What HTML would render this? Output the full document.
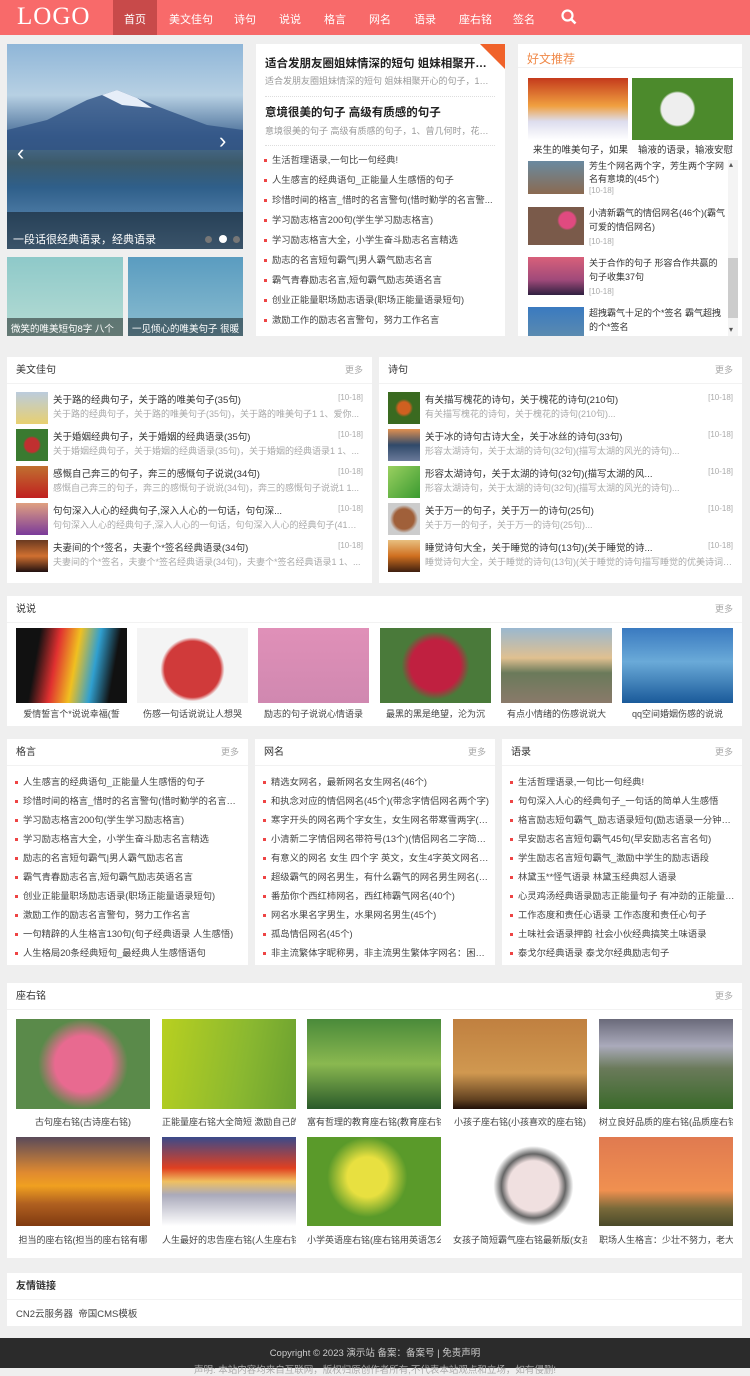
<!DOCTYPE html>
<html><head><meta charset="utf-8"><style>
*{margin:0;padding:0;box-sizing:border-box}
body{width:750px;height:1368px;background:#efefef;font-family:"Liberation Sans","Noto Sans CJK SC",sans-serif;position:relative;overflow:hidden;color:#333}
.a{position:absolute}
.w{position:absolute;background:#fff}
.hd{position:absolute;left:0;right:0;top:0;height:27px;border-bottom:1px solid #f2f2f2;font-size:10px;line-height:27px;padding-left:9px;color:#333}
.hd span{position:absolute;right:9px;color:#aaa;font-size:9px}
.nw{white-space:nowrap;overflow:hidden;text-overflow:ellipsis}
ul{list-style:none}
.dl li{font-size:9.3px;height:19px;line-height:19px;padding-left:10px;position:relative;white-space:nowrap;overflow:hidden;text-overflow:ellipsis;color:#444}
.dl li:before{content:"";position:absolute;left:2px;top:8px;width:3px;height:3px;background:#e44}
.it{position:absolute;left:9px;right:9px;height:37px}
.it i{position:absolute;left:0;top:1px;width:32px;height:32px}
.it b{position:absolute;left:37px;right:40px;top:1px;font-weight:normal;font-size:9.5px;color:#333;white-space:nowrap;overflow:hidden;text-overflow:ellipsis}
.it s{position:absolute;left:37px;right:0;top:16px;text-decoration:none;font-size:9px;color:#aaa;white-space:nowrap;overflow:hidden;text-overflow:ellipsis}
.it em{position:absolute;right:0;top:2px;font-style:normal;font-size:8px;color:#aaa}
.cap{position:absolute;font-size:9px;color:#444;text-align:center;white-space:nowrap;overflow:hidden}
</style></head><body>
<div class="a" style="left:0;top:0;width:750px;height:35px;background:#f86a6a"></div>
<div class="a" style="left:17px;top:3px;font-family:'Liberation Serif',serif;font-size:25px;color:#fff;letter-spacing:1px">LOGO</div>
<div class="a" style="left:113px;top:0;width:44px;height:35px;background:#c84a4a"></div>
<div class="a" style="top:11px;font-size:11px;color:#fff;left:0;width:750px">
<span class="a" style="left:124px">首页</span><span class="a" style="left:169px">美文佳句</span><span class="a" style="left:234px">诗句</span><span class="a" style="left:279px">说说</span><span class="a" style="left:324px">格言</span><span class="a" style="left:369px">网名</span><span class="a" style="left:414px">语录</span><span class="a" style="left:459px">座右铭</span><span class="a" style="left:513px">签名</span></div>
<svg class="a" style="left:561px;top:9px" width="16" height="16"><circle cx="6.5" cy="6.5" r="5" fill="none" stroke="#fff" stroke-width="2.2"/><path d="M10 10l4.5 4.5" stroke="#fff" stroke-width="2.6"/></svg>

<div class="a" style="left:7px;top:44px;width:236px;height:205px;background:linear-gradient(#8fb6d8 0%,#b7d0e3 25%,#4a6f99 45%,#3c5a6a 58%,#2f5f8a 70%,#6b98c0 100%)"></div>
<svg class="a" style="left:7px;top:80px" width="236" height="70"><path d="M0 50L40 40 80 20 110 10 130 18 160 30 200 45 236 50V70H0z" fill="#2f5385" opacity=".8"/><path d="M95 15l15-5 20 8 15 10-30-3z" fill="#e6eef8"/></svg>
<div class="a" style="left:7px;top:212px;width:236px;height:37px;background:rgba(0,0,0,.45)"></div>
<div class="a" style="left:13px;top:231px;font-size:11px;color:#fff">一段话很经典语录，经典语录</div>
<div class="a" style="left:205px;top:236px;width:7px;height:7px;border-radius:50%;background:#777"></div>
<div class="a" style="left:219px;top:235px;width:8px;height:8px;border-radius:50%;background:#fff"></div>
<div class="a" style="left:233px;top:236px;width:7px;height:7px;border-radius:50%;background:#777"></div>
<div class="a" style="left:17px;top:140px;color:#fff;font-size:22px">‹</div>
<div class="a" style="left:219px;top:128px;color:#fff;font-size:22px">›</div>
<div class="a" style="left:7px;top:257px;width:116px;height:79px;background:linear-gradient(#8ec9c9,#b6dcd4)"></div>
<div class="a" style="left:128px;top:257px;width:115px;height:79px;background:linear-gradient(#5a9cc0,#8bbdd0)"></div>
<div class="a" style="left:7px;top:318px;width:116px;height:18px;background:rgba(0,0,0,.45)"></div>
<div class="a" style="left:128px;top:318px;width:115px;height:18px;background:rgba(0,0,0,.45)"></div>
<div class="a nw" style="left:11px;top:321px;width:110px;font-size:9.5px;color:#fff">微笑的唯美短句8字 八个</div>
<div class="a nw" style="left:132px;top:321px;width:110px;font-size:9.5px;color:#fff">一见倾心的唯美句子 很暖</div>

<div class="w" style="left:256px;top:44px;width:249px;height:292px"></div>
<svg class="a" style="left:480px;top:44px" width="25" height="25"><path d="M0 0H25V25z" fill="#f0622a"/></svg>
<div class="a nw" style="left:265px;top:55px;width:230px;font-size:11.5px;font-weight:bold;color:#222">适合发朋友圈姐妹情深的短句 姐妹相聚开心的</div>
<div class="a nw" style="left:265px;top:74px;width:230px;font-size:9px;color:#999">适合发朋友圈姐妹情深的短句 姐妹相聚开心的句子，1、...</div>
<div class="a" style="left:265px;top:96px;width:230px;border-top:1px dotted #ddd"></div>
<div class="a nw" style="left:265px;top:104px;width:230px;font-size:11.5px;font-weight:bold;color:#222">意境很美的句子 高级有质感的句子</div>
<div class="a nw" style="left:265px;top:124px;width:230px;font-size:9px;color:#999">意境很美的句子 高级有质感的句子，1、曾几何时，花前...</div>
<div class="a" style="left:265px;top:145px;width:230px;border-top:1px dotted #ddd"></div>
<ul class="a dl" style="left:262px;top:151px;width:234px"><li style="height:20px">生活哲理语录,一句比一句经典!</li><li style="height:20px">人生感言的经典语句_正能量人生感悟的句子</li><li style="height:20px">珍惜时间的格言_惜时的名言警句(惜时勤学的名言警...</li><li style="height:20px">学习励志格言200句(学生学习励志格言)</li><li style="height:20px">学习励志格言大全，小学生奋斗励志名言精选</li><li style="height:20px">励志的名言短句霸气|男人霸气励志名言</li><li style="height:20px">霸气青春励志名言,短句霸气励志英语名言</li><li style="height:20px">创业正能量职场励志语录(职场正能量语录短句)</li><li style="height:20px">激励工作的励志名言警句，努力工作名言</li></ul>

<div class="w" style="left:518px;top:44px;width:224px;height:292px"></div>
<div class="a" style="left:527px;top:50px;font-size:12px;color:#f08a4a">好文推荐</div>
<div class="a" style="left:518px;top:67px;width:224px;border-top:1px solid #f2f2f2"></div>
<div class="a" style="left:528px;top:78px;width:100px;height:62px;background:linear-gradient(#c43a1c,#f0a040 45%,#dde 70%,#fff)"></div>
<div class="a" style="left:632px;top:78px;width:101px;height:62px;background:radial-gradient(circle at 45% 50%,#eee 0 16px,#4c8a2c 18px)"></div>
<div class="a" style="left:533px;top:142px;font-size:9.5px;color:#333">来生的唯美句子，如果</div>
<div class="a" style="left:638px;top:142px;font-size:9.5px;color:#333">输液的语录，输液安慰</div>
<div class="a" style="left:528px;top:161px;width:56px;height:33px;background:linear-gradient(#6a8aa0,#8a6a50)"></div>
<div class="a nw" style="left:589px;top:159px;width:136px;font-size:9px;color:#333">芳生个网名两个字，芳生两个字网<br>名有意境的(45个)</div>
<div class="a" style="left:589px;top:186px;font-size:8px;color:#aaa">[10-18]</div>
<div class="a" style="left:528px;top:207px;width:56px;height:38px;background:radial-gradient(circle at 70% 35%,#e04a80 0 8px,#7a5a4a 10px)"></div>
<div class="a" style="left:589px;top:206px;width:136px;font-size:9px;color:#333;line-height:14px">小清新霸气的情侣网名(46个)(霸气可爱的情侣网名)</div>
<div class="a" style="left:589px;top:237px;font-size:8px;color:#aaa">[10-18]</div>
<div class="a" style="left:528px;top:257px;width:56px;height:38px;background:linear-gradient(#d8607a,#a04a7a 60%,#302040)"></div>
<div class="a" style="left:589px;top:256px;width:136px;font-size:9px;color:#333;line-height:14px">关于合作的句子 形容合作共赢的句子收集37句</div>
<div class="a" style="left:589px;top:287px;font-size:8px;color:#aaa">[10-18]</div>
<div class="a" style="left:528px;top:307px;width:56px;height:29px;background:linear-gradient(#3a7ac0,#5a8ab0)"></div>
<div class="a" style="left:589px;top:306px;width:136px;font-size:9px;color:#333;line-height:14px">超拽霸气十足的个*签名 霸气超拽的个*签名</div>
<div class="a" style="left:728px;top:160px;width:10px;height:176px;background:#f4f4f4"></div>
<div class="a" style="left:728px;top:258px;width:10px;height:60px;background:#ccc"></div>
<div class="a" style="left:729px;top:160px;font-size:8px;color:#555">▴</div>
<div class="a" style="left:729px;top:325px;font-size:8px;color:#555">▾</div>

<div class="w" style="left:7px;top:357px;width:365px;height:226px"><div class="hd">美文佳句<span>更多</span></div>
<div class="it" style="top:34px"><i style="background:linear-gradient(#bcd,#e8d070)"></i><b>关于路的经典句子，关于路的唯美句子(35句)</b><s>关于路的经典句子，关于路的唯美句子(35句)，关于路的唯美句子1 1、爱你...</s><em>[10-18]</em></div>
<div class="it" style="top:71px"><i style="background:radial-gradient(circle,#c03030 0 7px,#3a7a30 9px)"></i><b>关于婚姻经典句子，关于婚姻的经典语录(35句)</b><s>关于婚姻经典句子，关于婚姻的经典语录(35句)，关于婚姻的经典语录1 1、...</s><em>[10-18]</em></div>
<div class="it" style="top:108px"><i style="background:linear-gradient(#c07030,#c02020)"></i><b>感慨自己奔三的句子，奔三的感慨句子说说(34句)</b><s>感慨自己奔三的句子，奔三的感慨句子说说(34句)，奔三的感慨句子说说1 1...</s><em>[10-18]</em></div>
<div class="it" style="top:145px"><i style="background:linear-gradient(#e0a080,#7a3a9a)"></i><b>句句深入人心的经典句子,深入人心的一句话，句句深...</b><s>句句深入人心的经典句子,深入人心的一句话，句句深入人心的经典句子(41句)...</s><em>[10-18]</em></div>
<div class="it" style="top:182px"><i style="background:linear-gradient(#6a3a20,#d07030,#201010)"></i><b>夫妻间的个*签名，夫妻个*签名经典语录(34句)</b><s>夫妻间的个*签名，夫妻个*签名经典语录(34句)，夫妻个*签名经典语录1 1、...</s><em>[10-18]</em></div>
</div>
<div class="w" style="left:379px;top:357px;width:363px;height:226px"><div class="hd">诗句<span>更多</span></div>
<div class="it" style="top:34px"><i style="background:radial-gradient(circle,#d06020 0 6px,#3a6a20 9px)"></i><b>有关描写槐花的诗句，关于槐花的诗句(210句)</b><s>有关描写槐花的诗句，关于槐花的诗句(210句)...</s><em>[10-18]</em></div>
<div class="it" style="top:71px"><i style="background:linear-gradient(#e09050,#304a6a,#6a7a9a)"></i><b>关于冰的诗句古诗大全，关于冰丝的诗句(33句)</b><s>形容太湖诗句，关于太湖的诗句(32句)(描写太湖的风光的诗句)...</s><em>[10-18]</em></div>
<div class="it" style="top:108px"><i style="background:linear-gradient(135deg,#9ad060,#3a9a30)"></i><b>形容太湖诗句，关于太湖的诗句(32句)(描写太湖的风...</b><s>形容太湖诗句，关于太湖的诗句(32句)(描写太湖的风光的诗句)...</s><em>[10-18]</em></div>
<div class="it" style="top:145px"><i style="background:radial-gradient(circle,#a0603a 0 10px,#ccc 14px)"></i><b>关于万一的句子，关于万一的诗句(25句)</b><s>关于万一的句子，关于万一的诗句(25句)...</s><em>[10-18]</em></div>
<div class="it" style="top:182px"><i style="background:linear-gradient(#e8c080,#d07020,#402010)"></i><b>睡觉诗句大全，关于睡觉的诗句(13句)(关于睡觉的诗...</b><s>睡觉诗句大全，关于睡觉的诗句(13句)(关于睡觉的诗句描写睡觉的优美诗词)...</s><em>[10-18]</em></div>
</div>

<div class="w" style="left:7px;top:596px;width:735px;height:130px"><div class="hd">说说<span>更多</span></div></div>
<div class="a" style="left:16px;top:628px;width:111px;height:75px;background:linear-gradient(100deg,#111 20%,#e03030,#f0c020,#30a0d0,#111 85%)"></div>
<div class="a" style="left:137px;top:628px;width:111px;height:75px;background:radial-gradient(circle at 50% 55%,#d03a3a 0 28px,#f4f4f4 32px)"></div>
<div class="a" style="left:258px;top:628px;width:111px;height:75px;background:linear-gradient(#e090b8,#d088b0)"></div>
<div class="a" style="left:380px;top:628px;width:111px;height:75px;background:radial-gradient(circle,#c02040 0 25px,#4a7a3a 34px)"></div>
<div class="a" style="left:501px;top:628px;width:111px;height:75px;background:linear-gradient(#9ab8d0,#e0c090 40%,#6a7a5a 60%,#8a7a6a)"></div>
<div class="a" style="left:622px;top:628px;width:111px;height:75px;background:linear-gradient(#3a7ac0,#6aaad8 45%,#1a5a9a)"></div>
<div class="cap" style="left:16px;top:707px;width:111px">爱情誓言个*说说幸福(誓</div>
<div class="cap" style="left:137px;top:707px;width:111px">伤感一句话说说让人想哭</div>
<div class="cap" style="left:258px;top:707px;width:111px">励志的句子说说心情语录</div>
<div class="cap" style="left:380px;top:707px;width:111px">最黑的黑是绝望，沦为沉</div>
<div class="cap" style="left:501px;top:707px;width:111px">有点小情绪的伤感说说大</div>
<div class="cap" style="left:622px;top:707px;width:111px">qq空间婚姻伤感的说说</div>

<div class="w" style="left:7px;top:739px;width:241px;height:226px"><div class="hd">格言<span>更多</span></div>
<ul class="dl" style="position:absolute;left:6px;top:34px;width:230px"><li>人生感言的经典语句_正能量人生感悟的句子</li><li>珍惜时间的格言_惜时的名言警句(惜时勤学的名言警句)</li><li>学习励志格言200句(学生学习励志格言)</li><li>学习励志格言大全，小学生奋斗励志名言精选</li><li>励志的名言短句霸气|男人霸气励志名言</li><li>霸气青春励志名言,短句霸气励志英语名言</li><li>创业正能量职场励志语录(职场正能量语录短句)</li><li>激励工作的励志名言警句，努力工作名言</li><li>一句精辟的人生格言130句(句子经典语录 人生感悟)</li><li>人生格局20条经典短句_最经典人生感悟语句</li></ul></div>
<div class="w" style="left:255px;top:739px;width:240px;height:226px"><div class="hd">网名<span>更多</span></div>
<ul class="dl" style="position:absolute;left:6px;top:34px;width:228px"><li>精选女网名，最新网名女生网名(46个)</li><li>和执念对应的情侣网名(45个)(带念字情侣网名两个字)</li><li>寒字开头的网名两个字女生，女生网名带寒雪两字(40...</li><li>小清新二字情侣网名带符号(13个)(情侣网名二字简约...</li><li>有意义的网名 女生 四个字 英文，女生4字英文网名(4...</li><li>超级霸气的网名男生，有什么霸气的网名男生网名(45...</li><li>番茄你个西红柿网名，西红柿霸气网名(40个)</li><li>网名水果名字男生，水果网名男生(45个)</li><li>孤岛情侣网名(45个)</li><li>非主流繁体字昵称男，非主流男生繁体字网名：困一...</li></ul></div>
<div class="w" style="left:502px;top:739px;width:240px;height:226px"><div class="hd">语录<span>更多</span></div>
<ul class="dl" style="position:absolute;left:6px;top:34px;width:230px"><li>生活哲理语录,一句比一句经典!</li><li>句句深入人心的经典句子_一句话的简单人生感悟</li><li>格言励志短句霸气_励志语录短句(励志语录一分钟以上)</li><li>早安励志名言短句霸气45句(早安励志名言名句)</li><li>学生励志名言短句霸气_激励中学生的励志语段</li><li>林黛玉**怪气语录 林黛玉经典怼人语录</li><li>心灵鸡汤经典语录励志正能量句子 有冲劲的正能量句子</li><li>工作态度和责任心语录 工作态度和责任心句子</li><li>土味社会语录押韵 社会小伙经典搞笑土味语录</li><li>泰戈尔经典语录 泰戈尔经典励志句子</li></ul></div>

<div class="w" style="left:7px;top:983px;width:735px;height:275px"><div class="hd">座右铭<span>更多</span></div></div>
<div class="a" style="left:16px;top:1019px;width:134px;height:90px;background:radial-gradient(circle at 50% 50%,#e86a90 0 28px,#5a8a4a 45px)"></div>
<div class="a" style="left:162px;top:1019px;width:134px;height:90px;background:linear-gradient(100deg,#b8d020,#8ab830 60%,#6aa030)"></div>
<div class="a" style="left:307px;top:1019px;width:134px;height:90px;background:linear-gradient(#4a8a3a,#8ab850 50%,#2a5a2a)"></div>
<div class="a" style="left:453px;top:1019px;width:134px;height:90px;background:linear-gradient(#c08040,#d09850 60%,#604020 90%,#201008)"></div>
<div class="a" style="left:599px;top:1019px;width:134px;height:90px;background:linear-gradient(#6a6a7a,#aab 30%,#6a7a5a 55%,#3a6a2a)"></div>
<div class="cap" style="left:16px;top:1115px;width:134px">古句座右铭(古诗座右铭)</div>
<div class="cap" style="left:162px;top:1115px;width:134px">正能量座右铭大全简短 激励自己的</div>
<div class="cap" style="left:307px;top:1115px;width:134px">富有哲理的教育座右铭(教育座右铭</div>
<div class="cap" style="left:453px;top:1115px;width:134px">小孩子座右铭(小孩喜欢的座右铭)</div>
<div class="cap" style="left:599px;top:1115px;width:134px">树立良好品质的座右铭(品质座右铭</div>
<div class="a" style="left:16px;top:1137px;width:134px;height:89px;background:linear-gradient(#5a4a5a,#e08a30 40%,#f0a020 55%,#b06020 75%,#803a10)"></div>
<div class="a" style="left:162px;top:1137px;width:134px;height:89px;background:linear-gradient(#3a4a8a,#e04020 35%,#f0c060 50%,#aab 65%,#fff)"></div>
<div class="a" style="left:307px;top:1137px;width:134px;height:89px;background:radial-gradient(circle at 45% 45%,#e8e040 0 20px,#5a9a2a 40px)"></div>
<div class="a" style="left:453px;top:1137px;width:134px;height:89px;background:radial-gradient(circle at 60% 55%,#f0e0e0 0 25px,#666 32px,#fff 40px)"></div>
<div class="a" style="left:599px;top:1137px;width:134px;height:89px;background:linear-gradient(#e07a50,#f09050 60%,#7a6a3a 80%,#4a4a2a)"></div>
<div class="cap" style="left:16px;top:1233px;width:134px">担当的座右铭(担当的座右铭有哪</div>
<div class="cap" style="left:162px;top:1233px;width:134px">人生最好的忠告座右铭(人生座右铭</div>
<div class="cap" style="left:307px;top:1233px;width:134px">小学英语座右铭(座右铭用英语怎么</div>
<div class="cap" style="left:453px;top:1233px;width:134px">女孩子简短霸气座右铭最新版(女孩</div>
<div class="cap" style="left:599px;top:1233px;width:134px">职场人生格言：少壮不努力，老大</div>

<div class="w" style="left:7px;top:1273px;width:735px;height:53px"><div class="hd" style="font-weight:bold">友情链接</div>
<div class="a" style="left:9px;top:33px;font-size:9.5px;color:#444">CN2云服务器&nbsp;&nbsp;帝国CMS模板</div></div>

<div class="a" style="left:0;top:1338px;width:750px;height:30px;background:#2b2b2b"></div>
<div class="a" style="left:0;top:1345px;width:750px;text-align:center;font-size:9.5px;color:#ccc">Copyright © 2023 演示站 备案：备案号 | 免责声明</div>
<div class="a" style="left:0;top:1362px;width:750px;text-align:center;font-size:9.5px;color:#aaa">声明: 本站内容均来自互联网，版权归原创作者所有,不代表本站观点和立场，如有侵删!</div>
</body></html>
